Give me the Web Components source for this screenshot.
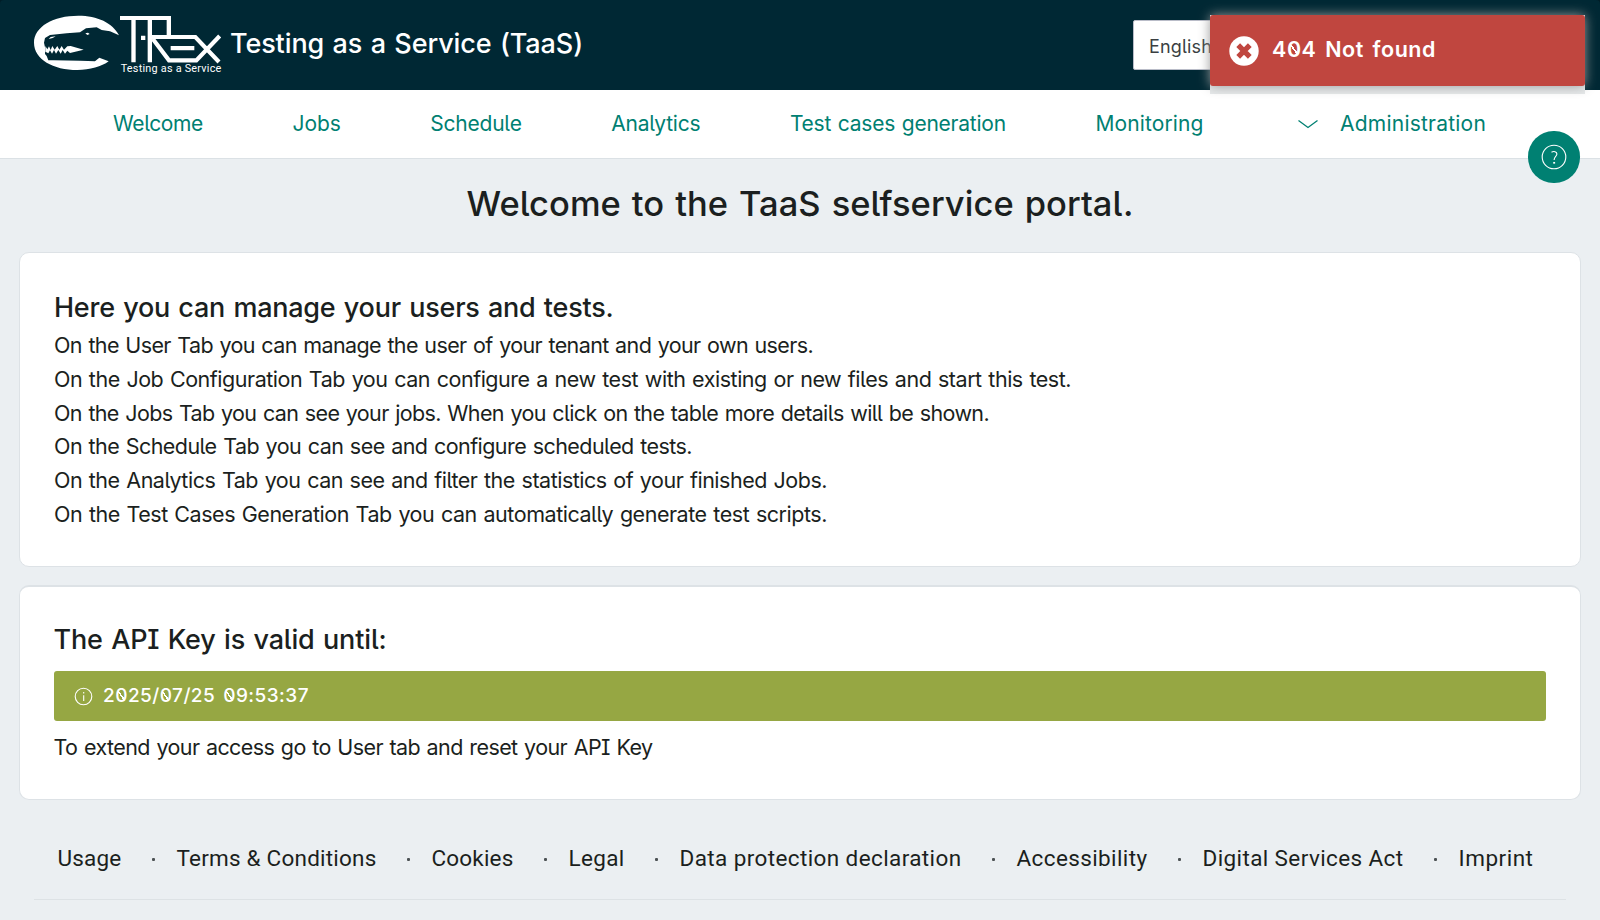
<!DOCTYPE html>
<html lang="en">
<head>
<meta charset="utf-8">
<title>TaaS selfservice portal</title>
<style>
html,body{margin:0;height:920px;overflow:hidden}
body{background:#001d27;font-family:Inter,"Noto Sans",sans-serif;font-feature-settings:"cv05","cv08";color:#1b1f20}
</style>
</head>
<body>
<taas-app></taas-app>
<script>
const make = (name, html) => {
  const tpl = document.createElement('template');
  tpl.innerHTML = html;
  customElements.define(name, class extends HTMLElement {
    constructor() {
      super();
      this.attachShadow({ mode: 'open' }).appendChild(tpl.content.cloneNode(true));
    }
  });
};

make('trex-logo', `
<style>:host{display:block;width:188px;height:61px}svg{display:block}</style>
<svg width="188" height="61" viewBox="102 39 564 183" fill="#fff">
  <path d="M357 106C338 68 292 47 235 47C160 47 102 80 102 128C102 178 160 210 232 210C270 210 305 200 326 184L298 173L285 184L240 182L160 181L145 181L140 168L135 162L136 146L132 128L135 114L150 105L200 100L240 97L258 85L290 82L305 90L330 94Z"/>
  <path d="M136 138L142 148L147 139L152 150L157 138L164 149L172 138L178 149L185 138L192 149L202 139L212 138L251 149L210 159L202 152L195 161L188 150L182 161L175 150L168 161L162 150L156 161L150 151L145 160L136 155Z"/>
  <path d="M146 117L152 111L167 109L158 114ZM256 100L264 98L269 102L262 105Z"/>
  <path d="M360 48H513V106H500V60H456V187H443V60H407V187H394V60H360ZM423 107H436V120H423ZM512 138H583V151H512Z"/>
  <path d="M456 111H586L657 186M659 108L589 181H507L458 116" fill="none" stroke="#fff" stroke-width="12.5"/>
  <text x="362" y="216" font-family="Roboto,sans-serif" font-size="32.5" textLength="302" lengthAdjust="spacing">Testing as a Service</text>
</svg>`);

make('lang-select', `
<style>:host{display:block;box-sizing:border-box;width:300px;height:50px;background:#fff;border:1px solid #b9bcc8;border-radius:2px;padding-left:15px;font-size:18px;line-height:51px;color:#3a3f42}</style>
<t-fit w="63">English</t-fit>`);

make('app-header', `
<style>
:host{display:flex;box-sizing:border-box;height:90px;background:#002834;padding:0 0 0 34px;border-radius:4px 4px 0 0;color:#fff}
trex-logo{margin-top:13px}
.t{margin-left:8px;font-size:27px;font-weight:500;line-height:88px}
lang-select{margin:20px 0 0 550px}
</style>
<trex-logo></trex-logo>
<div class="t"><t-fit w="353">Testing as a Service (TaaS)</t-fit></div>
<lang-select></lang-select>`);

make('app-nav', `
<style>
:host{display:flex;box-sizing:border-box;height:69px;background:#fff;border-bottom:1px solid #dbe1e5;gap:89.6px;padding-left:113px;font-size:21px;line-height:67px;color:#008072}
.a{display:flex;align-items:center;height:67px;padding-left:4px}
svg{margin-right:21px}
</style>
<t-fit w="90">Welcome</t-fit><t-fit w="48">Jobs</t-fit><t-fit w="91.500">Schedule</t-fit><t-fit w="89">Analytics</t-fit><t-fit w="216">Test cases generation</t-fit><t-fit w="108">Monitoring</t-fit>
<div class="a"><svg width="22" height="12" viewBox="0 0 22 12" fill="none" stroke="#008072" stroke-width="1.3"><path d="M1.5 2.5L11 9.5L20.500 2.500"/></svg><t-fit w="146">Administration</t-fit></div>`);

make('help-button', `
<style>:host{display:flex;align-items:center;justify-content:center;width:52px;height:52px;border-radius:25.500px;background:#008072}</style>
<svg width="26" height="26" viewBox="0 0 26 26" fill="none" stroke="#fff" stroke-width="1.1"><circle cx="13" cy="13" r="11.800"/><path d="M10.500 8.200C12.500 7 16 7.400 15.900 10C15.800 12.500 13.200 12.400 13.100 16"/><path d="M12.200 18.800h1.900" stroke-width="1.700"/></svg>`);

make('error-toast', `
<style>
:host{display:block;width:375px;height:79px;background:#e6e9ea}
.b{display:flex;align-items:center;height:71px;border-radius:3px;background:#c0463f;box-shadow:0 0 12px #999;color:#fff;font-size:21.500px;font-weight:600;padding-left:19px}
svg{margin-right:13px}
.z{background:linear-gradient(to top right,transparent 44%,#fff 44%,#fff 56%,transparent 56%) 38% 50%/.36em .48em no-repeat}
t-fit{margin-top:-3px;word-spacing:.13em}
</style>
<div class="b"><svg width="30" height="30" viewBox="0 0 30 30"><circle cx="15" cy="15" r="14.700" fill="#fff"/><path d="M9.200 9.200L20.800 20.800M20.800 9.200L9.200 20.800" stroke="#c0463f" stroke-width="5.300"/></svg><t-fit w="164">4<span class="z">0</span>4 Not found</t-fit></div>`);

make('page-card', `
<style>:host{display:block;box-sizing:border-box;background:#fff;border:1px solid #dde2e6;border-radius:10px;padding:0 34px}
::slotted(h2){margin:0;font-size:27px;font-weight:500}</style>
<slot></slot>`);

make('date-banner', `
<style>
:host{display:flex;align-items:center;height:50px;border-radius:3px;background:#96a743;color:#fff;font-size:19px;font-weight:500;padding-left:20px}
svg{margin-right:10px}
.z{background:linear-gradient(to top right,transparent 43%,#fff 43%,#fff 57%,transparent 57%) 42% 50%/.36em .5em no-repeat}
t-fit{margin-top:-1px;word-spacing:.13em}
</style>
<svg width="19" height="19" viewBox="0 0 19 19" fill="none" stroke="#fff" stroke-width="1.100"><circle cx="9.500" cy="9.500" r="8.300"/><path d="M9.700 8.200V14M9.700 5V6.500"/></svg>
<t-fit w="206">2<span class="z">0</span>25/<span class="z">0</span>7/25 <span class="z">0</span>9:53:37</t-fit>`);

make('app-footer', `
<style>
:host{display:block;margin:41px 34px 0 34px;border-bottom:1px solid #dde2e5;height:58px;font-family:Roboto,sans-serif;font-size:22.500px;line-height:34px}
nav{display:flex;padding-left:23.500px}
t-fit{word-spacing:0}
i{width:55px;height:36px;box-sizing:border-box;padding-left:30.500px;display:flex;align-items:center}
i::before{content:"";width:3px;height:3px;border-radius:1px;background:#4c5254}
</style>
<nav><t-fit w="64">Usage</t-fit><i></i><t-fit w="200">Terms &amp; Conditions</t-fit><i></i><t-fit w="82">Cookies</t-fit><i></i><t-fit w="56">Legal</t-fit><i></i><t-fit w="282">Data protection declaration</t-fit><i></i><t-fit w="131">Accessibility</t-fit><i></i><t-fit w="201">Digital Services Act</t-fit><i></i><t-fit w="75">Imprint</t-fit></nav>`);

make('taas-app', `
<style>
:host{display:block;position:relative;width:1600px;height:920px;overflow:hidden}
main{box-sizing:border-box;height:761px;background:#ebeff2}
h1{margin:0;height:93px;line-height:89px;font-size:34.500px;font-weight:500;text-align:center}
page-card{margin:0 19px}
.one{height:315px;padding-top:30px}
.one h2{line-height:49px;height:46.400px}
.l{font-size:21.500px;line-height:33.7px;height:33.7px}
.two{height:215px;margin-top:18px;border-top-width:2px;padding-top:30px}
.two h2{line-height:45px;height:54px;margin-left:-.5px}
.two .l{margin:10.400px 0 0 -.5px}
help-button{position:absolute;left:1528px;top:131px}
error-toast{position:absolute;left:1210px;top:15px}
</style>
<app-header></app-header>
<app-nav></app-nav>
<main>
<h1><t-fit w="667">Welcome to the TaaS selfservice portal.</t-fit></h1>
<page-card class="one">
<h2><t-fit w="559.500">Here you can manage your users and tests.</t-fit></h2>
<div class="l"><t-fit w="759">On the User Tab you can manage the user of your tenant and your own users.</t-fit></div>
<div class="l"><t-fit w="1017">On the Job Configuration Tab you can configure a new test with existing or new files and start this test.</t-fit></div>
<div class="l"><t-fit w="935">On the Jobs Tab you can see your jobs. When you click on the table more details will be shown.</t-fit></div>
<div class="l"><t-fit w="638">On the Schedule Tab you can see and configure scheduled tests.</t-fit></div>
<div class="l"><t-fit w="773">On the Analytics Tab you can see and filter the statistics of your finished Jobs.</t-fit></div>
<div class="l"><t-fit w="773">On the Test Cases Generation Tab you can automatically generate test scripts.</t-fit></div>
</page-card>
<page-card class="two">
<h2><t-fit w="333">The API Key is valid until:</t-fit></h2>
<date-banner></date-banner>
<div class="l"><t-fit w="599">To extend your access go to User tab and reset your API Key</t-fit></div>
</page-card>
<app-footer></app-footer>
</main>
<help-button></help-button>
<error-toast></error-toast>`);

// Label that spreads its letters so the text takes the width in its "w" attribute.
customElements.define('t-fit', class extends HTMLElement {
  constructor() {
    super();
    this.attachShadow({ mode: 'open' }).innerHTML = '<style>:host{display:inline-block;flex:none;white-space:nowrap;word-spacing:.05em}</style><slot></slot>';
  }
  connectedCallback() {
    const w = +this.getAttribute('w');
    const natural = this.getBoundingClientRect().width;
    this.style.letterSpacing = (w - natural) / this.textContent.length + 'px';
  }
});
</script>
</body>
</html>
